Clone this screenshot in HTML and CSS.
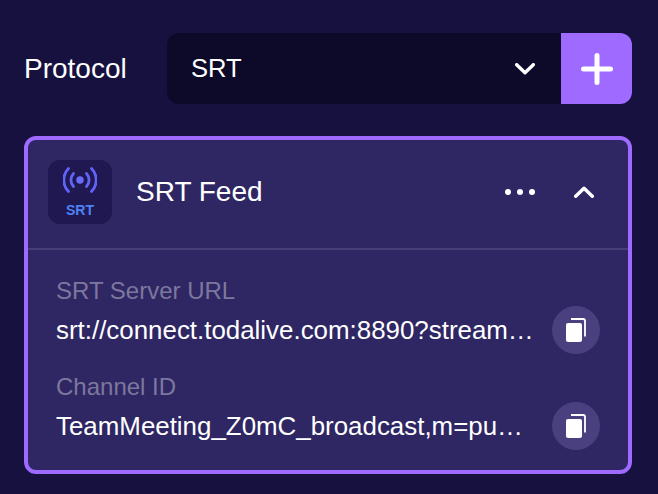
FILE: index.html
```html
<!DOCTYPE html>
<html>
    <head>
        <title>Protocol</title>
        <link rel="stylesheet" href="styles.css">
    </head>
    <body>
        <div class="protocol-row">
            <span class="protocol-label">Protocol</span>
            <div class="select-box">
                <span>SRT</span>
                <svg class="chevron" width="20" height="12" viewBox="0 0 20 12"><path d="M1.700 1.700l8.300 8 8.300-8" fill="none" stroke="#fff" stroke-width="3.400" stroke-linecap="round" stroke-linejoin="round"/></svg>
            </div>
            <button class="add-button">
                <svg width="32" height="32" viewBox="0 0 32 32"><path d="M16 2.500v27M2.500 16h27" fill="none" stroke="#fff" stroke-width="5" stroke-linecap="round"/></svg>
            </button>
        </div>
        <div class="feed-card">
            <div class="feed-header">
                <div class="feed-logo">
                    <svg width="34" height="26" viewBox="0 0 34 26">
                        <circle cx="17" cy="13" r="3.700" fill="#6a6cff"/>
                        <g fill="none" stroke="#6164f8" stroke-width="2.800" stroke-linecap="round">
                            <path d="M10.500 6.500a9.500 9.500 0 0 0 0 13M23.500 6.500a9.500 9.500 0 0 1 0 13"/>
                            <path d="M5.500 1.500a16.500 16.500 0 0 0 0 23M28.500 1.500a16.500 16.500 0 0 1 0 23"/>
                        </g>
                    </svg>
                    <span class="feed-logo-text">SRT</span>
                </div>
                <span class="feed-title">SRT Feed</span>
                <svg class="more-icon" width="30" height="6" viewBox="0 0 30 6"><circle cx="3" cy="3" r="3" fill="#fff"/><circle cx="15" cy="3" r="3" fill="#fff"/><circle cx="27" cy="3" r="3" fill="#fff"/></svg>
                <svg class="chevron-up" width="20" height="12" viewBox="0 0 20 12"><path d="M1.700 10.300l8.300-8 8.300 8" fill="none" stroke="#fff" stroke-width="3.400" stroke-linecap="round" stroke-linejoin="round"/></svg>
            </div>
            <div class="feed-body">
                <div class="feed-field">
                    <div class="field-label">SRT Server URL</div>
                    <div class="field-row">
                        <div class="field-value">srt://connect.todalive.com:8890?stream…</div>
                        <button class="copy-button">
                            <svg width="20" height="26" viewBox="0 0 20 26"><path d="M5 2h12a2 2 0 0 1 2 2v15.500" fill="none" stroke="#fff" stroke-width="1.800"/><rect y="6" width="16" height="19" rx="2" fill="#fff"/></svg>
                        </button>
                    </div>
                </div>
                <div class="feed-field">
                    <div class="field-label">Channel ID</div>
                    <div class="field-row">
                        <div class="field-value">TeamMeeting_Z0mC_broadcast,m=pu…</div>
                        <button class="copy-button">
                            <svg width="20" height="26" viewBox="0 0 20 26"><path d="M5 2h12a2 2 0 0 1 2 2v15.500" fill="none" stroke="#fff" stroke-width="1.800"/><rect y="6" width="16" height="19" rx="2" fill="#fff"/></svg>
                        </button>
                    </div>
                </div>
            </div>
        </div>
    </body>
</html>
```

FILE: styles.css
```css
html, body {
    height: 100%;
}
body {
    margin: 0;
    padding: 33px 26px 0 24px;
    box-sizing: border-box;
    overflow: hidden;
    background-color: #16113f;
    color: #fff;
    font-family: "Liberation Sans", Arial, sans-serif;
}
button {
    border: none;
    padding: 0;
    cursor: pointer;
}
.protocol-row {
    display: flex;
    align-items: center;
    height: 71px;
}
.protocol-label {
    width: 143px;
    font-size: 28px;
}
.select-box {
    flex: 1;
    height: 100%;
    display: flex;
    align-items: center;
    justify-content: space-between;
    padding: 0 26px 0 24px;
    box-sizing: border-box;
    background-color: #0d0929;
    border-radius: 12px 0 0 12px;
    font-size: 25.600px;
}
.add-button {
    width: 71px;
    height: 100%;
    display: flex;
    align-items: center;
    justify-content: center;
    background-color: #9f6aff;
    border-radius: 0 12px 12px 0;
}
.feed-card {
    margin-top: 32px;
    height: 338px;
    box-sizing: border-box;
    border: 4px solid #9f6aff;
    border-radius: 12px;
    background-color: #2f2763;
}
.feed-header {
    height: 110px;
    display: flex;
    align-items: flex-start;
    padding: 20px 34px 0 20px;
    border-bottom: 2px solid #473f78;
    box-sizing: border-box;
}
.feed-logo {
    width: 64px;
    height: 64px;
    margin-right: 24px;
    display: flex;
    flex-direction: column;
    align-items: center;
    padding-top: 7px;
    box-sizing: border-box;
    background-color: #201851;
    border-radius: 12px;
}
.feed-logo-text {
    margin-top: 9px;
    color: #4f82f5;
    font-size: 14px;
    line-height: 16px;
    font-weight: bold;
}
.feed-title {
    flex: 1;
    font-size: 28px;
    line-height: 64px;
}
.more-icon {
    margin-top: 29px;
    margin-right: 39px;
}
.chevron-up {
    margin-top: 26px;
}
.feed-body {
    padding: 27px 28px 0 28px;
}
.feed-field {
    margin-bottom: 19.400px;
}
.field-label {
    color: #7d779f;
    font-size: 24px;
    line-height: 28px;
    margin-bottom: 1px;
}
.field-row {
    display: flex;
    align-items: center;
    justify-content: space-between;
}
.field-value {
    font-size: 25.900px;
    line-height: 30px;
    white-space: nowrap;
}
.copy-button {
    width: 48px;
    height: 48px;
    display: flex;
    align-items: center;
    justify-content: center;
    background-color: #4a4080;
    border-radius: 50%;
}
```
